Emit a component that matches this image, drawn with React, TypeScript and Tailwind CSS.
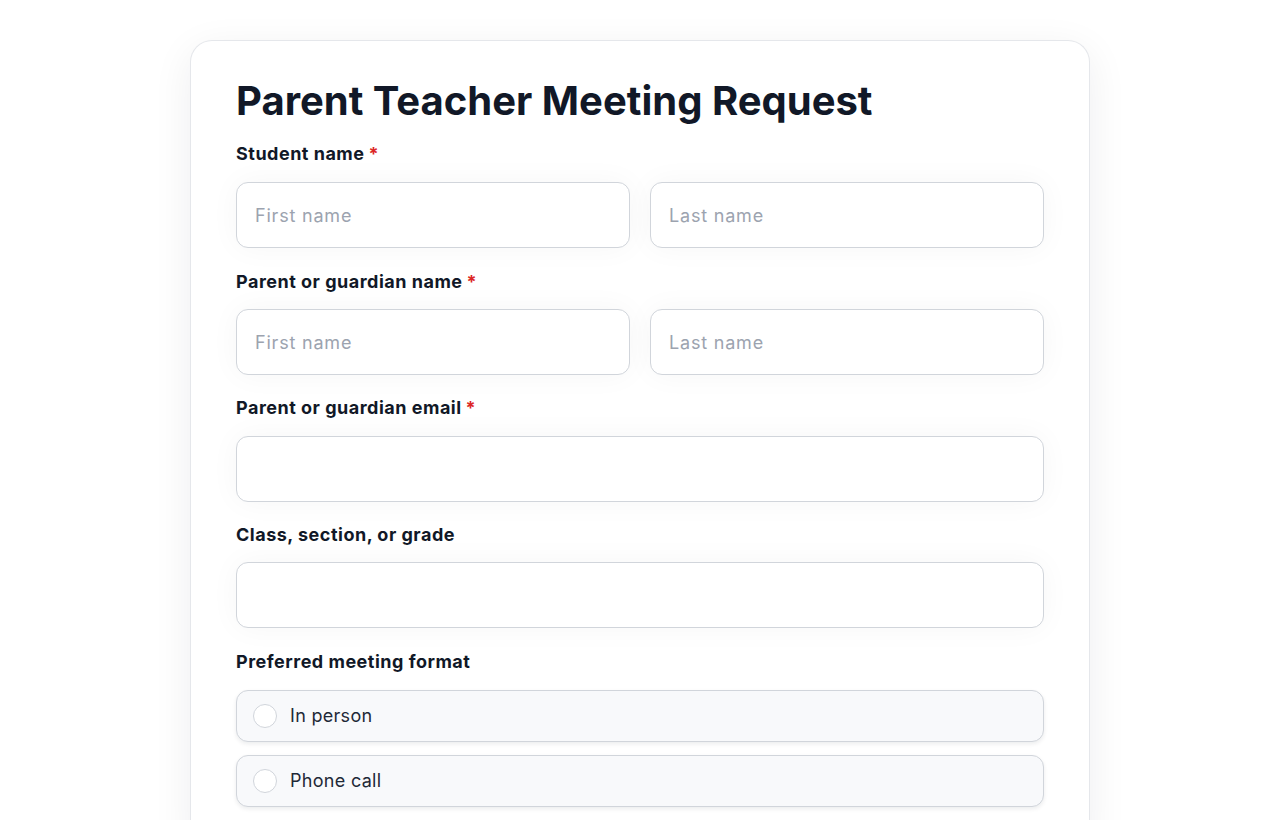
import React from "react";

const font = { fontFamily: "Inter, 'Noto Sans', sans-serif" };

function Label({ text, required }: { text: string; required?: boolean }) {
  return (
    <div className="text-[18px] leading-[24px] font-bold text-[#111827] tracking-[0.5px] pt-[1px]">
      {text}
      {required && <span className="text-[#dc2626] ml-[4px]">*</span>}
    </div>
  );
}

function Input({ placeholder }: { placeholder?: string }) {
  return (
    <input
      placeholder={placeholder}
      className="w-full h-[66px] rounded-[12px] border border-[#d1d5db] bg-white px-[18px] text-[18px] tracking-[0.8px] text-[#111827] placeholder:text-[#9ca3af] outline-none shadow-[0_0_30px_rgba(17,24,39,0.04)]"
      style={font}
    />
  );
}

function Radio({ text }: { text: string }) {
  return (
    <div className="flex items-center h-[52px] rounded-[12px] border border-[#d1d5db] bg-[#f8f9fb] px-[16px] shadow-[0_2px_4px_rgba(17,24,39,0.08)]">
      <div className="w-[24px] h-[24px] rounded-full border border-[#d1d5db] bg-white shrink-0" />
      <span className="ml-[13px] text-[18px] tracking-[0.3px] text-[#1f2937] -mt-[1px]">{text}</span>
    </div>
  );
}

export default function App() {
  return (
    <div className="min-h-[820px] bg-white pt-[40px] flex justify-center" style={font}>
      <div className="w-[900px] h-[800px] rounded-t-[22px] border border-b-0 border-[#e5e7eb] bg-white px-[45px] pt-[36px] shadow-[0_10px_40px_rgba(17,24,39,0.07)]">
        <h1 className="text-[40px] leading-[48px] font-bold text-[#111827] tracking-[0px]">
          Parent Teacher Meeting Request
        </h1>
        <div className="mt-[16px]">
          <Label text="Student name" required />
          <div className="mt-[16px] grid grid-cols-2 gap-[20px]">
            <Input placeholder="First name" />
            <Input placeholder="Last name" />
          </div>
        </div>
        <div className="mt-[21px]">
          <Label text="Parent or guardian name" required />
          <div className="mt-[15px] grid grid-cols-2 gap-[20px]">
            <Input placeholder="First name" />
            <Input placeholder="Last name" />
          </div>
        </div>
        <div className="mt-[20px]">
          <Label text="Parent or guardian email" required />
          <div className="mt-[16px]">
            <Input />
          </div>
        </div>
        <div className="mt-[20px]">
          <Label text="Class, section, or grade" />
          <div className="mt-[15px]">
            <Input />
          </div>
        </div>
        <div className="mt-[21px]">
          <Label text="Preferred meeting format" />
          <div className="mt-[16px] flex flex-col gap-[13px]">
            <Radio text="In person" />
            <Radio text="Phone call" />
          </div>
        </div>
      </div>
    </div>
  );
}
